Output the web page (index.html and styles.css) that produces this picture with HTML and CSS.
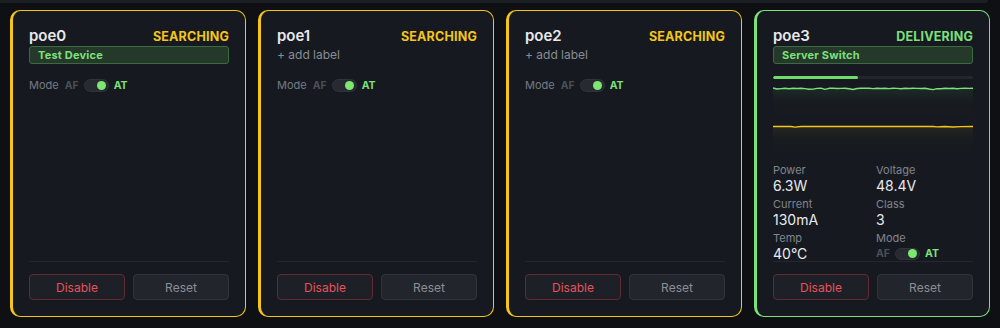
FILE: index.html
```html
<!DOCTYPE html>
<html>
<head>
<meta charset="utf-8">
<link rel="stylesheet" href="styles.css">
</head>
<body>
<div class="strip"></div>
<div class="grid">
  <div class="card searching">
    <div class="body">
      <div class="head"><span class="name">poe0</span><span class="status">SEARCHING</span></div>
      <div class="label">Test Device</div>
      <div class="mode-row">
        <span class="mode-txt">Mode</span>
        <span class="af">AF</span>
        <span class="toggle"><span class="knob"></span></span>
        <span class="at">AT</span>
      </div>
    </div>
    <div class="foot">
      <button class="btn disable">Disable</button>
      <button class="btn reset">Reset</button>
    </div>
  </div>

  <div class="card searching">
    <div class="body">
      <div class="head"><span class="name">poe1</span><span class="status">SEARCHING</span></div>
      <div class="add">+ add label</div>
      <div class="mode-row">
        <span class="mode-txt">Mode</span>
        <span class="af">AF</span>
        <span class="toggle"><span class="knob"></span></span>
        <span class="at">AT</span>
      </div>
    </div>
    <div class="foot">
      <button class="btn disable">Disable</button>
      <button class="btn reset">Reset</button>
    </div>
  </div>

  <div class="card searching">
    <div class="body">
      <div class="head"><span class="name">poe2</span><span class="status">SEARCHING</span></div>
      <div class="add">+ add label</div>
      <div class="mode-row">
        <span class="mode-txt">Mode</span>
        <span class="af">AF</span>
        <span class="toggle"><span class="knob"></span></span>
        <span class="at">AT</span>
      </div>
    </div>
    <div class="foot">
      <button class="btn disable">Disable</button>
      <button class="btn reset">Reset</button>
    </div>
  </div>

  <div class="card delivering">
    <div class="body">
      <div class="head"><span class="name">poe3</span><span class="status">DELIVERING</span></div>
      <div class="label">Server Switch</div>
      <div class="bar"><div class="fill" style="width:42.5%"></div></div>
      <svg class="chart" width="200" height="36" viewBox="0 0 200 36" preserveAspectRatio="none">
        <defs>
          <linearGradient id="gg" x1="0" y1="0" x2="0" y2="1">
            <stop offset="0" stop-color="#6fdc6a" stop-opacity="0.09"/>
            <stop offset="0.4" stop-color="#6fdc6a" stop-opacity="0.01"/>
            <stop offset="1" stop-color="#6fdc6a" stop-opacity="0"/>
          </linearGradient>
          <linearGradient id="gy" x1="0" y1="0" x2="0" y2="1">
            <stop offset="0" stop-color="#f5c518" stop-opacity="0.07"/>
            <stop offset="0.4" stop-color="#f5c518" stop-opacity="0.01"/>
            <stop offset="1" stop-color="#f5c518" stop-opacity="0"/>
          </linearGradient>
        </defs>
        <polygon fill="url(#gg)" points="0,4 4,5 8,4.6 12,4.2 16,4.8 20,4.3 24,4.5 28,4.2 32,4.6 36,5.2 40,5.1 44,4.4 48,4.2 52,5.4 56,4.3 60,4.1 64,4.5 68,4.4 72,4.2 76,4.8 80,5.5 84,4.5 88,4.2 92,4.3 96,4.3 100,4.6 104,4.2 108,4.5 112,4.3 116,4.6 120,4.2 124,4.4 128,4.7 132,4.3 136,4.5 140,4.2 144,4.4 148,4.5 152,4.2 156,5 160,5.6 164,4.6 168,4.8 172,4.3 176,4.5 180,4.2 184,4.7 188,4.4 192,4.3 196,4.4 200,4.2 200,36 0,36"/>
        <polyline fill="none" stroke="#7de07a" stroke-width="1.4" stroke-linejoin="round" points="0,4 4,5 8,4.6 12,4.2 16,4.8 20,4.3 24,4.5 28,4.2 32,4.6 36,5.2 40,5.1 44,4.4 48,4.2 52,5.4 56,4.3 60,4.1 64,4.5 68,4.4 72,4.2 76,4.8 80,5.5 84,4.5 88,4.2 92,4.3 96,4.3 100,4.6 104,4.2 108,4.5 112,4.3 116,4.6 120,4.2 124,4.4 128,4.7 132,4.3 136,4.5 140,4.2 144,4.4 148,4.5 152,4.2 156,5 160,5.6 164,4.6 168,4.8 172,4.3 176,4.5 180,4.2 184,4.7 188,4.4 192,4.3 196,4.4 200,4.2"/>
      </svg>
      <svg class="chart chart2" width="200" height="36" viewBox="0 0 200 36" preserveAspectRatio="none">
        <polygon fill="url(#gy)" points="0,4.5 18,4.5 22,5.1 28,4.5 40,4.5 160,4.5 164,4.9 172,4.5 180,5 188,4.6 200,4.5 200,36 0,36"/>
        <polyline fill="none" stroke="#f5c518" stroke-width="1.4" points="0,4.5 18,4.5 22,5.1 28,4.5 40,4.5 160,4.5 164,4.9 172,4.5 180,5 188,4.6 200,4.5"/>
      </svg>
      <div class="stats">
        <div class="stat"><div class="k">Power</div><div class="v">6.3W</div></div>
        <div class="stat"><div class="k">Voltage</div><div class="v">48.4V</div></div>
        <div class="stat"><div class="k">Current</div><div class="v">130mA</div></div>
        <div class="stat"><div class="k">Class</div><div class="v">3</div></div>
        <div class="stat"><div class="k">Temp</div><div class="v">40°C</div></div>
        <div class="stat"><div class="k">Mode</div>
          <div class="v mode-inline">
            <span class="af">AF</span>
            <span class="toggle"><span class="knob"></span></span>
            <span class="at">AT</span>
          </div>
        </div>
      </div>
    </div>
    <div class="foot">
      <button class="btn disable">Disable</button>
      <button class="btn reset">Reset</button>
    </div>
  </div>
</div>
</body>
</html>
```

FILE: styles.css
```css
* { box-sizing: border-box; }
html, body { margin: 0; padding: 0; }
body {
  background: #0e1014;
  font-family: "Inter", "Liberation Sans", sans-serif;
  color: #e6e7ea;
  width: 1000px;
  height: 328px;
  overflow: hidden;
}
.strip {
  height: 3px;
  margin-right: 12px;
  background: #1b1e24;
  border-bottom-right-radius: 8px;
}
.grid {
  display: grid;
  grid-template-columns: repeat(4, 1fr);
  gap: 12px;
  padding: 7px 10px 10px 10px;
}
.card {
  height: 307px;
  background: #161a20;
  border: 1px solid #f5c518;
  border-left-width: 3px;
  border-radius: 10px;
  padding: 16px 16px 16px 16px;
  display: flex;
  flex-direction: column;
}
.card.delivering { border-color: #7de07a; }
.body { flex: 1 1 0; min-height: 0; }
.head {
  display: flex;
  justify-content: space-between;
  align-items: baseline;
  height: 18px;
  line-height: 18px;
}
.name { font-size: 15px; font-weight: 600; color: #e8e9ec; }
.status { font-size: 12.5px; font-weight: 700; color: #f5c518; letter-spacing: 0.2px; }
.delivering .status { color: #7de07a; }
.label {
  margin-top: 1px;
  height: 18px;
  background: #24392a;
  border: 1px solid #3b6a40;
  border-radius: 3px;
  padding: 0 8px;
  font-size: 11px;
  font-weight: 700;
  line-height: 16px;
  color: #7de07a;
  letter-spacing: 0.2px;
}
.add {
  margin-top: 1px;
  height: 18px;
  line-height: 18px;
  font-size: 12px;
  color: #878c95;
}
.mode-row {
  margin-top: 14px;
  display: flex;
  align-items: center;
  height: 14px;
  gap: 5px;
}
.mode-txt { font-size: 11px; color: #767b84; margin-right: 1px; }
.af { font-size: 10.5px; font-weight: 700; color: #4a4e56; }
.at { font-size: 10.5px; font-weight: 700; color: #7de07a; }
.toggle {
  width: 25px;
  height: 13px;
  border-radius: 7px;
  background: #272a30;
  border: 1px solid #30343b;
  display: flex;
  align-items: center;
  justify-content: flex-end;
  padding-right: 2px;
}
.knob {
  width: 9px;
  height: 9px;
  border-radius: 50%;
  background: #7de86f;
}
.bar {
  margin-top: 12px;
  height: 3px;
  background: #23272d;
  border-radius: 2px;
  overflow: hidden;
}
.fill { height: 100%; background: #6fdc6a; border-radius: 2px; }
.chart { display: block; margin-top: 5px; }
.chart2 { margin-top: 2px; }
.stats {
  margin-top: 6px;
  display: grid;
  grid-template-columns: 1fr 1fr;
  column-gap: 6px;
  row-gap: 4px;
}
.k { font-size: 11px; line-height: 13px; color: #80858e; }
.v { font-size: 14px; line-height: 17px; color: #e8e9ec; }
.mode-inline {
  display: flex;
  align-items: center;
  gap: 5px;
  height: 17px;
}
.mode-inline .toggle { height: 12px; }
.foot {
  border-top: 1px solid #24282e;
  padding-top: 12px;
  display: flex;
  gap: 8px;
}
.btn {
  flex: 1;
  height: 26px;
  border-radius: 4px;
  font-family: "Inter", "Liberation Sans", sans-serif;
  font-size: 12px;
  cursor: pointer;
}
.btn.disable {
  background: #1d2026;
  border: 1px solid #652a31;
  color: #e5535c;
}
.btn.reset {
  background: #22252b;
  border: 1px solid #30343b;
  color: #8a8e96;
}
```
